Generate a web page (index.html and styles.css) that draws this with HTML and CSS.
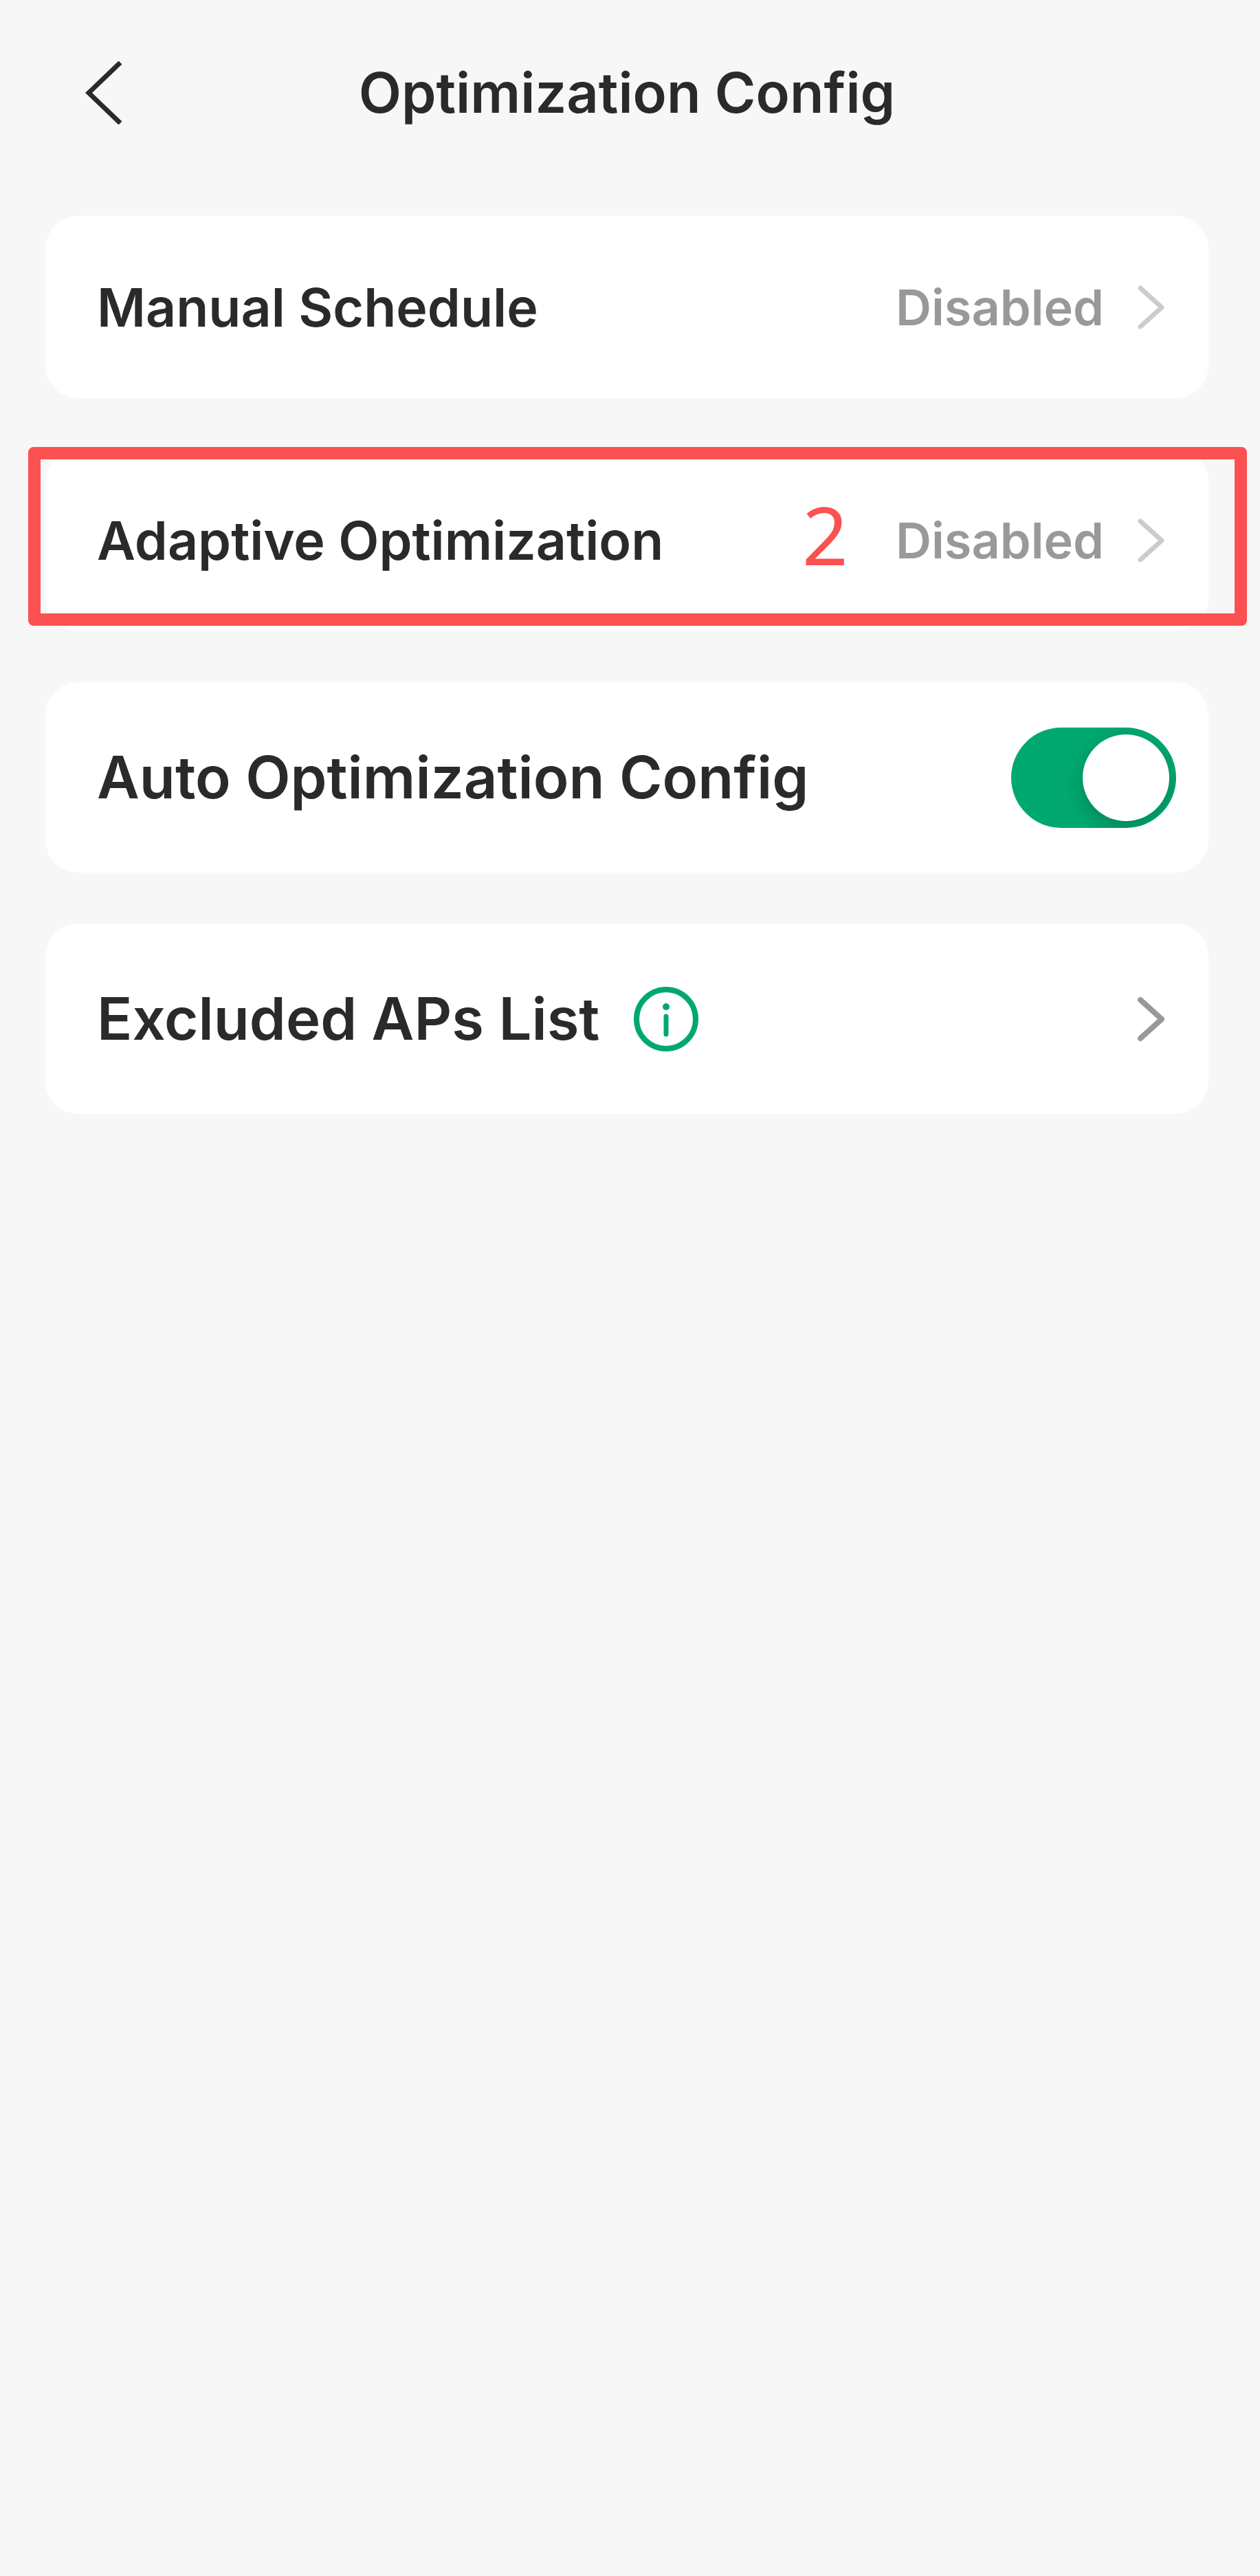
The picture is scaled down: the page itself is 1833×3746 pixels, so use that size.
FILE: index.html
```
<!DOCTYPE html>
<html lang="en">
<head>
    <meta charset="UTF-8">
    <meta name="viewport" content="width=device-width, initial-scale=1.0">
    <title>Optimization Config</title>
    <link rel="stylesheet" href="styles.css">
</head>
<body>

    <header class="topbar">
        <button class="back" aria-label="Back">
            <svg width="54" height="92" viewBox="0 0 54 92">
                <path d="M51 2 L5 46 L51 90" fill="none" stroke="#2a2a2a" stroke-width="7"/>
            </svg>
        </button>
        <h1>Optimization Config</h1>
    </header>

    <main class="list">
        <a class="card" href="#manual">
            <span class="label">Manual Schedule</span>
            <span class="value">Disabled</span>
            <svg class="arrow" width="40" height="64" viewBox="0 0 40 64">
                <path d="M5 4 L36 32 L5 60"/>
            </svg>
        </a>

        <div class="marked">
            <a class="card" href="#adaptive">
                <span class="label">Adaptive Optimization</span>
                <span class="value">Disabled</span>
                <svg class="arrow" width="40" height="64" viewBox="0 0 40 64">
                    <path d="M5 4 L36 32 L5 60"/>
                </svg>
            </a>
            <div class="mark"><span class="step">2</span></div>
        </div>

        <div class="card big">
            <label class="label" for="auto_config">Auto Optimization Config</label>
            <input class="switch" type="checkbox" role="switch" id="auto_config" checked>
        </div>

        <div class="card big">
            <a class="label" href="#excluded">Excluded APs List</a>
            <button class="info" aria-label="About excluded APs">
                <svg width="94" height="94" viewBox="0 0 94 94">
                    <circle cx="47" cy="47" r="43" fill="none" stroke="#00a870" stroke-width="8"/>
                    <circle cx="47" cy="29" r="5" fill="#00a870"/>
                    <path d="M47 43 V69" stroke="#00a870" stroke-width="7" stroke-linecap="round"/>
                </svg>
            </button>
            <a class="more" href="#excluded" aria-label="Open excluded APs list">
                <svg class="arrow dark" width="40" height="64" viewBox="0 0 40 64">
                    <path d="M5 4 L36 32 L5 60"/>
                </svg>
            </a>
        </div>
    </main>

</body>
</html>
```

FILE: styles.css
```
* {
    margin: 0;
    padding: 0;
    box-sizing: border-box;
}

body {
    min-height: 100vh;
    padding: 0 75px 0 66px;
    background-color: #f7f7f7;
    color: #2a2a2a;
    font-family: Inter, "Liberation Sans", sans-serif;
}

button {
    border: none;
    background: none;
    cursor: pointer;
}

a {
    color: inherit;
    text-decoration: none;
}

svg {
    display: block;
}

.topbar {
    display: grid;
    grid-template-columns: 1fr auto 1fr;
    align-items: center;
    height: 270px;
    margin-bottom: 44px;
}

.back {
    justify-self: start;
    margin-left: 58px;
}

h1 {
    font-size: 81px;
    font-weight: 600;
}

.list {
    display: flex;
    flex-direction: column;
    gap: 74px;
}

.card {
    display: flex;
    align-items: center;
    min-height: 265px;
    padding: 0 64px 0 75px;
    background: white;
    border-radius: 48px;
}

.label {
    font-size: 77px;
    font-weight: 600;
}

.value {
    margin-left: auto;
    margin-right: 48px;
    color: #999;
    font-size: 72px;
    font-weight: 600;
}

.arrow path {
    fill: none;
    stroke: #ccc;
    stroke-width: 7;
    stroke-linecap: round;
    stroke-linejoin: round;
}

.arrow.dark path {
    stroke: #999;
    stroke-width: 8;
}

.big {
    min-height: 277px;
}

.big .label {
    font-size: 85px;
}

/* red frame drawn over the second row */
.marked {
    position: relative;
}

.mark {
    position: absolute;
    top: -3px;
    right: -56px;
    bottom: 8px;
    left: -25px;
    display: flex;
    align-items: center;
    justify-content: flex-end;
    padding: 0 562px 8px 0;
    border: 18px solid #fb5151;
    border-radius: 8px;
    pointer-events: none;
}

.step {
    color: #fb5151;
    font-family: "Noto Sans", sans-serif;
    font-size: 117px;
    line-height: 1;
}

.switch {
    position: relative;
    width: 240px;
    height: 146px;
    margin-left: auto;
    margin-right: -17px;
    appearance: none;
    overflow: hidden;
    background: #ccc;
    border-radius: 73px;
    cursor: pointer;
}

.switch::before {
    content: "";
    position: absolute;
    top: 10px;
    left: 10px;
    width: 126px;
    height: 126px;
    background: white;
    border-radius: 50%;
    box-shadow: 0 10px 30px rgba(0, 0, 0, 0.2);
}

.switch:checked {
    background: #00a870;
}

.switch:checked::before {
    left: 104px;
}

.info {
    margin-left: 50px;
}

.more {
    margin-left: auto;
}
```
